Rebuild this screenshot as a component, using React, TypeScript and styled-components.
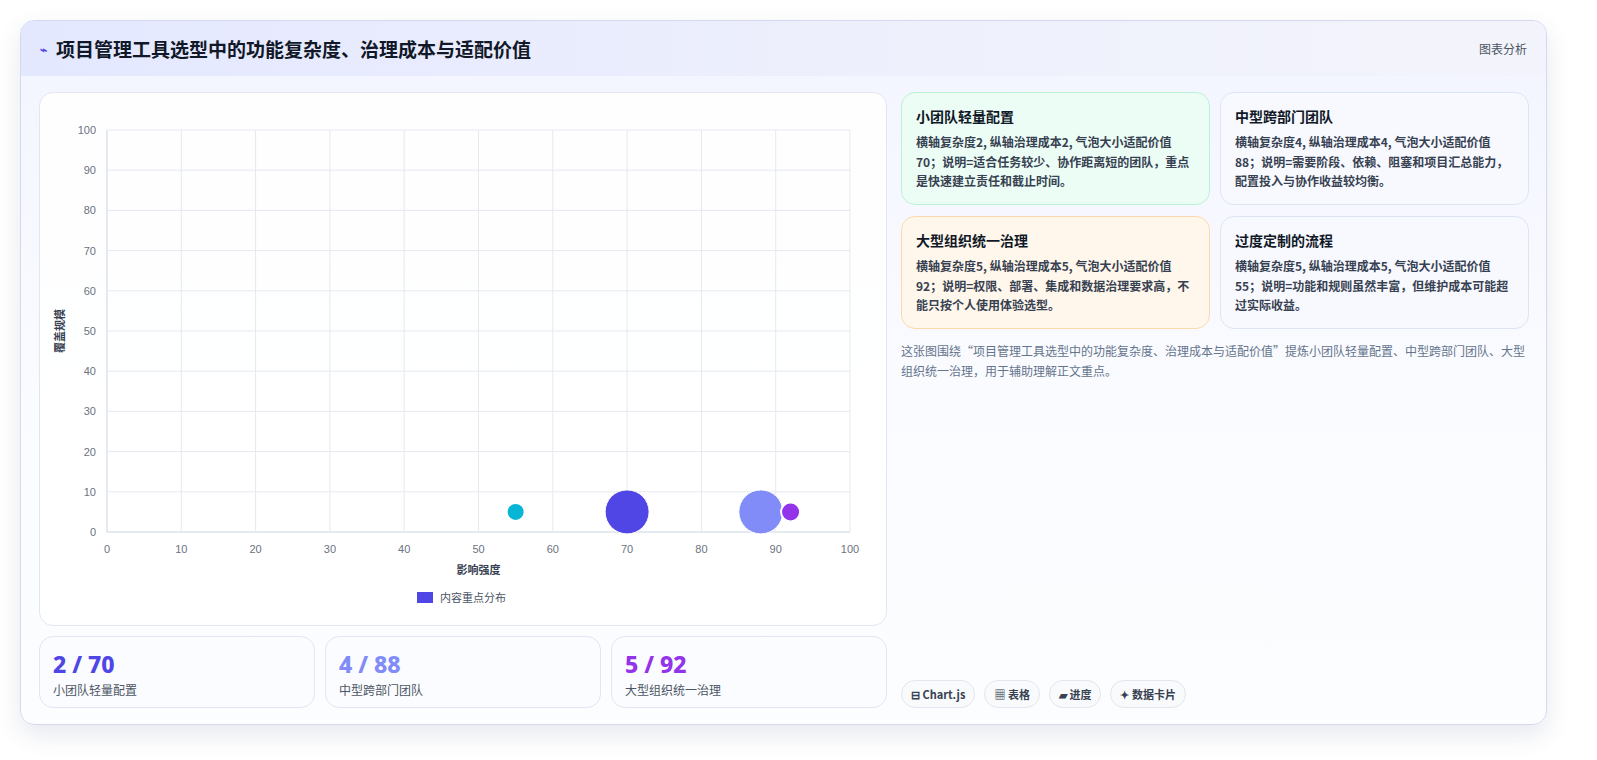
import React from "react";
import styled, { createGlobalStyle } from "styled-components";

const Global = createGlobalStyle`
  html, body { margin: 0; background: #fff; font-family: "Noto Sans CJK SC", "Noto Sans", sans-serif; overflow: hidden; }
  * { box-sizing: border-box; }
`;
const Page = styled.div`padding: 20px 50px 0 20px; width: 100%; height: 760px;`;
const Card = styled.div`
  height: 705px; border: 1px solid #d4d9f0; border-radius: 14px;
  background: linear-gradient(180deg, #f3f5ff 0%, #fbfcff 60%, #fcfdff 100%);
  box-shadow: 0 10px 24px rgba(60,70,120,0.12); overflow: hidden; display: flex; flex-direction: column;
`;
const Header = styled.div`
  height: 55px; flex: none; display: flex; align-items: center; justify-content: space-between; padding: 0 19px;
  background: linear-gradient(90deg, #e4e8ff, #eef0fc 60%, #f3f4fb);
`;
const Title = styled.h1`margin: 0; font-size: 19px; font-weight: 700; color: #111827; display: flex; align-items: center; gap: 9px;`;
const Tag = styled.span`font-size: 12px; color: #4b5563;`;
const Body = styled.div`flex: 1; min-height: 0; display: grid; grid-template-columns: 848px minmax(0, 1fr); gap: 14px; padding: 16px 17px 17px 18px;`;
const Left = styled.div`display: flex; flex-direction: column; gap: 10px; min-width: 0;`;
const ChartBox = styled.div`height: 534px; border: 1px solid #e1e6f2; border-radius: 14px; background: rgba(255,255,255,0.85); overflow: hidden;`;
const Stats = styled.div`display: grid; grid-template-columns: repeat(3, 1fr); gap: 10px;`;
const Stat = styled.div`height: 72px; border: 1px solid #e1e6f2; border-radius: 14px; background: #fbfcff; padding: 12px 13px;`;
const StatNum = styled.div<{ $c: string }>`font-size: 23px; font-weight: 800; color: ${p => p.$c}; line-height: 30px; font-family: "Noto Sans", "Noto Sans CJK SC", sans-serif;`;
const StatLbl = styled.div`font-size: 12px; color: #4b5563; margin-top: 2px;`;
const Right = styled.div`display: flex; flex-direction: column; min-width: 0;`;
const Grid = styled.div`display: grid; grid-template-columns: 1fr 1fr; gap: 11px 10px;`;
const Info = styled.div<{ $bg: string; $bd: string }>`
  height: 113px; border: 1px solid ${p => p.$bd}; background: ${p => p.$bg};
  border-radius: 14px; padding: 13px 14px;
`;
const InfoT = styled.div`font-size: 14px; font-weight: 700; color: #111827; margin-bottom: 6px;`;
const InfoP = styled.div`font-size: 12px; font-weight: 600; color: #374151; line-height: 19.5px;`;
const Note = styled.p`margin: 12px 0 0; font-size: 12px; color: #64748b; line-height: 20px;`;
const Chips = styled.div`margin-top: auto; display: flex; gap: 9px;`;
const Chip = styled.span`height: 28px; padding: 0 9px; border: 1px solid #e2e6ee; border-radius: 14px; background: #f8fafc; font-size: 11px; font-weight: 600; color: #374151; display: inline-flex; align-items: center;`;

const X0 = 67, Y0 = 37, W = 743, H = 402;
const xs = (v: number) => X0 + (v / 100) * W;
const ys = (v: number) => Y0 + H - (v / 100) * H;
const ticks = [0, 10, 20, 30, 40, 50, 60, 70, 80, 90, 100];

function Chart() {
  return (
    <svg width="846" height="532" style={{ display: "block" }}>
      {ticks.map(t => (
        <g key={t}>
          <line x1={xs(t)} x2={xs(t)} y1={Y0} y2={Y0 + H} stroke={t === 0 ? "#cbd5e1" : "#e5e9f0"} />
          <line x1={X0} x2={X0 + W} y1={ys(t)} y2={ys(t)} stroke={t === 0 ? "#cbd5e1" : "#e5e9f0"} />
          <text x={X0 - 11} y={ys(t) + 4} fontSize="11" fill="#6b7280" textAnchor="end" fontFamily="Liberation Sans, sans-serif">{t}</text>
          <text x={xs(t)} y={Y0 + H + 21} fontSize="11" fill="#6b7280" textAnchor="middle" fontFamily="Liberation Sans, sans-serif">{t}</text>
        </g>
      ))}
      <text x={X0 + W / 2} y={Y0 + H + 42} fontSize="11" fontWeight="700" fill="#374151" textAnchor="middle">影响强度</text>
      <text transform={`translate(24 ${Y0 + H / 2}) rotate(-90)`} fontSize="11" fontWeight="700" fill="#374151" textAnchor="middle">覆盖规模</text>
      <circle cx={xs(55)} cy={ys(5)} r="8" fill="#06b6d4" />
      <circle cx={xs(70)} cy={ys(5)} r="22" fill="#4f46e5" stroke="#fff" strokeWidth="1" />
      <circle cx={xs(88)} cy={ys(5)} r="22" fill="#818cf8" stroke="#fff" strokeWidth="1" />
      <circle cx={xs(92)} cy={ys(5)} r="9.5" fill="#9333ea" stroke="#fff" strokeWidth="2" />
      <rect x="377" y="499" width="16" height="11" fill="#4f46e5" />
      <text x="400" y="508.5" fontSize="11" fill="#4b5563">内容重点分布</text>
    </svg>
  );
}

export default function App() {
  return (
    <Page>
      <Global />
      <Card>
        <Header>
          <Title><span style={{ color: "#4f46e5", fontSize: 12 }}>⌁</span>项目管理工具选型中的功能复杂度、治理成本与适配价值</Title>
          <Tag>图表分析</Tag>
        </Header>
        <Body>
          <Left>
            <ChartBox><Chart /></ChartBox>
            <Stats>
              <Stat><StatNum $c="#4f46e5">2 / 70</StatNum><StatLbl>小团队轻量配置</StatLbl></Stat>
              <Stat><StatNum $c="#818cf8">4 / 88</StatNum><StatLbl>中型跨部门团队</StatLbl></Stat>
              <Stat><StatNum $c="#9333ea">5 / 92</StatNum><StatLbl>大型组织统一治理</StatLbl></Stat>
            </Stats>
          </Left>
          <Right>
            <Grid>
              <Info $bg="#ecfdf5" $bd="#bbf0d4"><InfoT>小团队轻量配置</InfoT><InfoP>横轴复杂度2, 纵轴治理成本2, 气泡大小适配价值70；说明=适合任务较少、协作距离短的团队，重点是快速建立责任和截止时间。</InfoP></Info>
              <Info $bg="#f7f9fe" $bd="#dde5f2"><InfoT>中型跨部门团队</InfoT><InfoP>横轴复杂度4, 纵轴治理成本4, 气泡大小适配价值88；说明=需要阶段、依赖、阻塞和项目汇总能力，配置投入与协作收益较均衡。</InfoP></Info>
              <Info $bg="#fff7eb" $bd="#fbd9ad"><InfoT>大型组织统一治理</InfoT><InfoP>横轴复杂度5, 纵轴治理成本5, 气泡大小适配价值92；说明=权限、部署、集成和数据治理要求高，不能只按个人使用体验选型。</InfoP></Info>
              <Info $bg="#f7f9fe" $bd="#dde5f2"><InfoT>过度定制的流程</InfoT><InfoP>横轴复杂度5, 纵轴治理成本5, 气泡大小适配价值55；说明=功能和规则虽然丰富，但维护成本可能超过实际收益。</InfoP></Info>
            </Grid>
            <Note>这张图围绕“项目管理工具选型中的功能复杂度、治理成本与适配价值”提炼小团队轻量配置、中型跨部门团队、大型组织统一治理，用于辅助理解正文重点。</Note>
            <Chips>
              <Chip>⊟ Chart.js</Chip><Chip>▦ 表格</Chip><Chip>▰ 进度</Chip><Chip>✦ 数据卡片</Chip>
            </Chips>
          </Right>
        </Body>
      </Card>
    </Page>
  );
}
